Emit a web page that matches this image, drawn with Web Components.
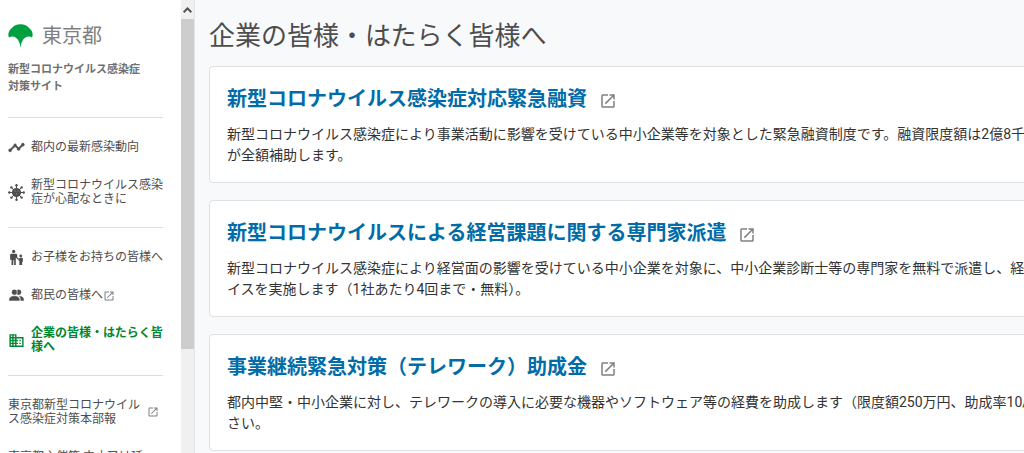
<!DOCTYPE html>
<html lang="ja">
<head>
<meta charset="utf-8">
<meta name="viewport" content="width=device-width, initial-scale=1">
<title>企業の皆様・はたらく皆様へ | 東京都 新型コロナウイルス感染症対策サイト</title>
<style>
  html, body { height: 100%; margin: 0; }
  body {
    overflow: hidden;
    background: #f7f9fb;
    color: #333;
    font-family: Roboto, "Noto Sans CJK JP", sans-serif;
    font-size: 14px;
  }
</style>
</head>
<body>
<app-shell>
  <side-bar slot="side">
    <nav-group>
      <nav-item icon="trend">都内の最新感染動向</nav-item>
      <nav-item icon="virus">新型コロナウイルス感染症が心配なときに</nav-item>
    </nav-group>
    <nav-group>
      <nav-item icon="family">お子様をお持ちの皆様へ</nav-item>
      <nav-item icon="people" external>都民の皆様へ</nav-item>
      <nav-item icon="office" active>企業の皆様・はたらく皆様へ</nav-item>
    </nav-group>
    <nav-group>
      <sub-link>東京都新型コロナウイルス感染症対策本部報</sub-link>
      <sub-link>東京都主催等 中止又は延期するイベント等</sub-link>
    </nav-group>
  </side-bar>
  <page-title>企業の皆様・はたらく皆様へ</page-title>
  <card-list>
    <info-card heading="新型コロナウイルス感染症対応緊急融資">新型コロナウイルス感染症により事業活動に影響を受けている中小企業等を対象とした緊急融資制度です。融資限度額は2億8千万円<br>が全額補助します。</info-card>
    <info-card heading="新型コロナウイルスによる経営課題に関する専門家派遣">新型コロナウイルス感染症により経営面の影響を受けている中小企業を対象に、中小企業診断士等の専門家を無料で派遣し、経営改<br>イスを実施します（1社あたり4回まで・無料）。</info-card>
    <info-card heading="事業継続緊急対策（テレワーク）助成金">都内中堅・中小企業に対し、テレワークの導入に必要な機器やソフトウェア等の経費を助成します（限度額250万円、助成率10/10<br>さい。</info-card>
  </card-list>
</app-shell>

<script>
const ICONS = {
  trend: '<path stroke="currentColor" stroke-width="1" d="M3,14L3.5,14.07L8.07,9.5C7.89,8.85 8.06,8.11 8.59,7.59C9.37,6.8 10.63,6.8 11.41,7.59C11.94,8.11 12.11,8.85 11.93,9.5L14.5,12.07L15,12C15.18,12 15.35,12 15.5,12.07L19.07,8.5C19,8.35 19,8.18 19,8A2,2 0 0,1 21,6A2,2 0 0,1 23,8A2,2 0 0,1 21,10C20.82,10 20.65,10 20.5,9.93L16.93,13.5C17,13.65 17,13.82 17,14A2,2 0 0,1 15,16A2,2 0 0,1 13,14L13.07,13.5L10.5,10.93C10.18,11 9.82,11 9.5,10.93L4.93,15.5L5,16A2,2 0 0,1 3,18A2,2 0 0,1 1,16A2,2 0 0,1 3,14Z"/>',
  virus: '<circle cx="12" cy="12" r="6.5"/><g stroke="currentColor" stroke-width="1.4"><path d="M12 2V22M2 12H22M5 5L19 19M19 5L5 19"/></g><circle cx="12" cy="1.8" r="1.7"/><circle cx="12" cy="22.2" r="1.7"/><circle cx="1.8" cy="12" r="1.7"/><circle cx="22.2" cy="12" r="1.7"/><circle cx="4.8" cy="4.8" r="1.7"/><circle cx="19.2" cy="4.8" r="1.7"/><circle cx="4.8" cy="19.2" r="1.7"/><circle cx="19.2" cy="19.2" r="1.7"/><g fill="#fff" opacity=".35"><circle cx="10" cy="10" r="1"/><circle cx="14" cy="10" r="1"/><circle cx="12" cy="14" r="1"/></g>',
  family: '<circle cx="8" cy="3.5" r="2.3"/><path d="M5 6.6H11A2 2 0 0 1 13 8.6V11.5L15.3 13.8L14.2 15L11 12V22.5H8.7V16H7.5V22.5H5V15H3V8.6A2 2 0 0 1 5 6.6Z"/><circle cx="18" cy="9.8" r="1.9"/><path d="M16.8 12.3H19.5A1.6 1.6 0 0 1 21 14V18H20V22.5H16V17L14.2 15L15.4 13.6Z"/>',
  people: '<path stroke="currentColor" stroke-width=".6" d="M16 17V19H2V17S2 13 9 13 16 17 16 17M12.5 7.5A3.5 3.5 0 1 0 9 11A3.5 3.5 0 0 0 12.5 7.5M15.94 13A5.32 5.32 0 0 1 18 17V19H22V17S22 13.37 15.94 13M15 4A3.39 3.39 0 0 0 13.07 4.59A5 5 0 0 1 13.07 10.41A3.39 3.39 0 0 0 15 11A3.5 3.5 0 0 0 15 4Z"/>',
  office: '<path d="M18,15H16V17H18M18,11H16V13H18M20,19H12V17H14V15H12V13H14V11H12V9H20M10,7H8V5H10M10,11H8V9H10M10,15H8V13H10M10,19H8V17H10M6,7H4V5H6M6,11H4V9H6M6,15H4V13H6M6,19H4V17H6M12,7V3H2V21H22V7H12Z"/>',
  external: '<path d="M14,3V5H17.59L7.76,14.83L9.17,16.24L19,6.41V10H21V3M19,19H5V5H12V3H5C3.89,3 3,3.9 3,5V19A2,2 0 0,0 5,21H19A2,2 0 0,0 21,19V12H19V19Z"/>'
};
const svg = (name) => `<svg viewBox="0 0 24 24" fill="currentColor" aria-hidden="true">${ICONS[name]}</svg>`;

function define(tag, render) {
  customElements.define(tag, class extends HTMLElement {
    constructor() {
      super();
      this.attachShadow({ mode: 'open' });
    }
    connectedCallback() {
      this.shadowRoot.innerHTML = render(this);
    }
  });
}

define('app-shell', () => `
  <style>
    :host { display: flex; height: 100vh; }
    main { flex: 1; min-width: 0; overflow: hidden; padding: 20px 0 0 14px; box-sizing: border-box; border-left: 1px solid #e6e6e8; }
  </style>
  <slot name="side"></slot>
  <main><slot></slot></main>`);

define('side-bar', () => `
  <style>
    :host { display: flex; flex: none; background: #fff; }
    .content { width: 155px; padding: 24px 18px 0 8px; overflow: hidden; }
    .logo { display: flex; align-items: center; gap: 9px; height: 24px; color: #808080; font-size: 20px; line-height: 24px; text-decoration: none; }
    .logo svg { width: 25px; height: 24px; }
    h1 { margin: 13px 0 22px; color: #707070; font-size: 11px; line-height: 17px; font-weight: 700; }
    .scroll { display: flex; flex-direction: column; width: 13px; background: #f0f0f0; }
    button { display: flex; align-items: center; justify-content: center; flex: none; height: 19px; padding: 0; border: 0; background: none; color: #505050; }
    button svg { width: 9px; height: 6px; }
    .track { flex: 1; }
    .thumb { height: 76%; background: #cdcdcd; }
  </style>
  <div class="content">
    <a class="logo" href="#">
      <svg viewBox="0 0 25 24" aria-hidden="true"><path fill="#00a040" d="M12.5 24C12.2 19.5 10.6 15.6 7.6 13.600C5.5 12.200 3 12.400 1 13.400C.2 12 .1 10 .8 8.200C1.500 6.300 2.600 4.900 4 4C5.600 1.600 8.500 .2 12.500 .2C16.500 .2 19.400 1.600 21 4C22.400 4.900 23.500 6.300 24.200 8.200C24.900 10 24.800 12 24 13.400C22 12.400 19.500 12.200 17.400 13.600C14.400 15.600 12.800 19.500 12.500 24Z"/></svg>
      <span>東京都</span>
    </a>
    <h1>新型コロナウイルス感染症<br>対策サイト</h1>
    <nav><slot></slot></nav>
  </div>
  <div class="scroll">
    <button type="button" aria-label="上へスクロール"><svg viewBox="0 0 9 6" fill="none" stroke="currentColor" stroke-width="2" aria-hidden="true"><path d="M.7 5.200L4.500 1.400L8.300 5.200"/></svg></button>
    <div class="track"><div class="thumb"></div></div>
  </div>`);

define('nav-group', () => `
  <style>
    :host { display: block; border-top: 1px solid #ddd; padding: 10px 0 9px; }
  </style>
  <slot></slot>`);

define('nav-item', (el) => `
  <style>
    :host { display: block; color: #4d4d4d; font-size: 12px; line-height: 14px; }
    :host([active]) { color: #008830; font-weight: 700; }
    a { display: flex; align-items: center; gap: 6px; padding: 12px 0; color: inherit; text-decoration: none; }
    a > svg { flex: none; width: 17px; height: 17px; margin: -2px 0; }
    span { flex: none; width: 132px; }
    span svg { width: 12px; height: 12px; vertical-align: -3px; color: #808080; }
  </style>
  <a href="#">${svg(el.getAttribute('icon'))}<span><slot></slot>${el.hasAttribute('external') ? svg('external') : ''}</span></a>`);

define('sub-link', () => `
  <style>
    :host { display: block; color: #4d4d4d; font-size: 12px; line-height: 14px; }
    a { display: flex; align-items: center; gap: 3px; padding: 12px 0; color: inherit; text-decoration: none; }
    span { flex: none; width: 136px; }
    svg { flex: none; width: 12px; height: 12px; color: #808080; }
  </style>
  <a href="#"><span><slot></slot></span>${svg('external')}</a>`);

define('page-title', () => `
  <style>
    :host { display: block; }
    h2 { margin: 0 0 14px; color: #4d4d4d; font-size: 26px; line-height: 32px; font-weight: 400; white-space: nowrap; }
  </style>
  <h2><slot></slot></h2>`);

define('card-list', () => `
  <style>
    :host { display: grid; gap: 17px; width: max-content; min-width: 100%; }
  </style>
  <slot></slot>`);

define('info-card', (el) => `
  <style>
    :host { display: block; padding: 18px 17px 16px; background: #fff; border: 1px solid #dfe1e3; border-radius: 4px; }
    h3 { margin: 0 0 11px; font-size: 20px; line-height: 28px; font-weight: 700; }
    a { display: flex; align-items: center; gap: 12px; color: #006ca8; text-decoration: none; }
    svg { width: 18px; height: 18px; margin-top: 4px; color: #808080; }
    p { margin: 0; font-size: 14px; line-height: 21px; white-space: nowrap; }
  </style>
  <h3><a href="#">${el.getAttribute('heading')}${svg('external')}</a></h3>
  <p><slot></slot></p>`);
</script>
</body>
</html>
